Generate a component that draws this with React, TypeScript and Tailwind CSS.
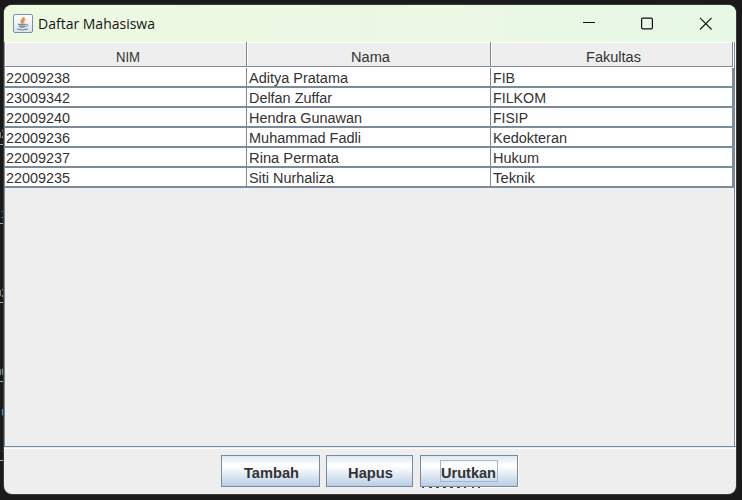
import React from "react";

const rows = [
  ["22009238", "Aditya Pratama", "FIB"],
  ["23009342", "Delfan Zuffar", "FILKOM"],
  ["22009240", "Hendra Gunawan", "FISIP"],
  ["22009236", "Muhammad Fadli", "Kedokteran"],
  ["22009237", "Rina Permata", "Hukum"],
  ["22009235", "Siti Nurhaliza", "Teknik"],
];

const editorMarks = [
  { top: 128, text: "2", color: "text-[#7da4c8]" },
  { top: 208, text: "1", color: "text-[#6f9fc8]" },
  { top: 287, text: "2", color: "text-[#7da4c8]" },
  { top: 366, text: "6", color: "text-[#6fa3b8]" },
  { top: 406, text: "u", color: "text-[#6fa3c8]" },
  { top: 445, text: "-", color: "text-[#a4a4c8]" },
];
const editorLines = [144, 223, 302, 381, 460];
const editorTicks = [132, 290, 369];

function JavaIcon() {
  return (
    <svg width="20" height="20" viewBox="0 0 20 20" className="shrink-0">
      <defs>
        <linearGradient id="tile" x1="0" y1="0" x2="0" y2="1">
          <stop offset="0" stopColor="#ffffff" />
          <stop offset="1" stopColor="#dde2e8" />
        </linearGradient>
      </defs>
      <rect x="0.5" y="0.5" width="19" height="18" rx="1.5" fill="url(#tile)" stroke="#7890ae" />
      <path d="M10.6 3C11.6 5.2 7.3 5.8 8.4 7.8L9.8 9.6M12.2 5.2C9.6 6.4 9.6 7.2 10.8 9" fill="none" stroke="#e8914a" strokeWidth="1.8" />
      <path d="M5.2 10.3H12.5L12 13Q9.4 14.3 6.6 13Z" fill="#9fb3c6" />
      <path d="M5 10.3H12.6M6 12.7Q9 14 12 12.7M12.7 10.5C15.8 9.9 15.3 12.4 12.4 12.7M4 15Q9.5 17 15 14.9" fill="none" stroke="#607f9e" />
    </svg>
  );
}

function TitleBar() {
  return (
    <div className="flex h-[37px] shrink-0 items-center bg-linear-to-r from-[#edf8e0] to-[#e8f8e7] pl-[9px] pr-[23px]">
      <JavaIcon />
      <svg width="124" height="20" className="ml-1 shrink-0 overflow-visible">
        <text x="1" y="15.2" textLength="117" lengthAdjust="spacingAndGlyphs" className="fill-[#151515] font-['Open_Sans',sans-serif] text-[14.5px]">Daftar Mahasiswa</text>
      </svg>
      <svg width="131" height="14" className="ml-auto" fill="none" stroke="#111">
        <path d="M1 5.5H13" />
        <rect x="59.6" y="1.1" width="10.8" height="10.8" rx="1.3" strokeWidth="1.2" />
        <path d="M118 0.9L129.6 12.5M129.6 0.9L118 12.5" strokeWidth="1.1" />
      </svg>
    </div>
  );
}

function Label({ children, width, bold = false }: { children: string; width: number; bold?: boolean }) {
  return (
    <svg width={width} height="18" className="block shrink-0 overflow-visible">
      <text x="0" y="14" textLength={width} lengthAdjust="spacingAndGlyphs" className={`fill-[#333] font-['Liberation_Sans',sans-serif] ${bold ? "text-[15px] font-bold" : "text-[15.5px]"}`}>{children}</text>
    </svg>
  );
}

const widths = [
  [64, 99, 22],
  [64, 83, 53],
  [64, 113, 35],
  [64, 112, 74],
  [64, 90, 46],
  [64, 85, 42],
];

const headers = [
  { name: "NIM", width: 24 },
  { name: "Nama", width: 39 },
  { name: "Fakultas", width: 55 },
];

function Table() {
  return (
    <div className="flex h-[405px] shrink-0 flex-col border-b border-l border-[#7a8a99] bg-[#eee]">
      <div className="flex h-[26px] shrink-0 bg-white">
        <div className="grid w-[728px] grid-cols-[242px_244px_242px]">
          {headers.map((h) => (
            <div key={h.name} className="flex h-[25px] items-center justify-center border-r border-b border-[#7a8a99] bg-[#eee] pl-[4px] pt-[5px] shadow-[inset_1px_1px_0_#fff]">
              <Label width={h.width}>{h.name}</Label>
            </div>
          ))}
        </div>
        <div className="ml-px w-px bg-[#7a8a99]" />
      </div>
      <div className="flex flex-1 bg-[#eee]">
        <div className="flex-1">
          {rows.map((r, i) => (
            <div key={r[0]} className="grid h-5 grid-cols-[242px_244px_243px] border-b-2 border-[#7a8a99] bg-white">
              {r.map((cell, j) => (
                <div key={cell} className={`h-[18px] border-[#7a8a99] pt-px ${j === 0 ? "border-r pl-px" : j === 1 ? "border-r pl-[2px]" : "border-r-2 pl-[2px]"}`}>
                  <Label width={widths[i][j]}>{cell}</Label>
                </div>
              ))}
            </div>
          ))}
        </div>
        <div className="w-px bg-[#7a8a99]" />
        <div className="w-px bg-white" />
      </div>
    </div>
  );
}

function Button({ label, box, text, focused = false }: { label: string; box: string; text: number; focused?: boolean }) {
  return (
    <button className={`flex h-8 items-center justify-center border border-[#7a8a99] bg-[linear-gradient(180deg,#dde8f3_0%,#fff_30%,#fff_34%,#b8cfe5_100%)] ${box}`}>
      <span className={`flex h-[22px] items-center justify-center ${focused ? "w-[58px] border border-[#a3b8cc] pr-px" : "pl-[2px]"}`}>
        <span className="pt-[4px]"><Label width={text} bold>{label}</Label></span>
      </span>
    </button>
  );
}

export default function App() {
  return (
    <div className="relative h-[500px] w-[742px] overflow-hidden bg-[#1a1a1a] pl-1 pt-[5px]">
      <div className="absolute left-0 top-0 h-full w-1 overflow-hidden">
        {editorMarks.map((m) => (
          <span key={m.top} style={{ top: m.top }} className={`absolute left-px font-['Liberation_Mono',monospace] text-[12px] leading-[14px] ${m.color}`}>{m.text}</span>
        ))}
        {editorTicks.map((y) => (
          <span key={y} style={{ top: y }} className="absolute left-0 h-[6px] w-px bg-[#a8792c]" />
        ))}
        {editorLines.map((y) => (
          <span key={y} style={{ top: y }} className="absolute left-0 h-px w-1 bg-[#aaa]" />
        ))}
      </div>
      <div className="relative flex h-[489px] w-[732px] flex-col overflow-hidden rounded-[8px] bg-[#eee] shadow-[0_0_0_1px_#3b3b3b]">
        <TitleBar />
        <Table />
        <div className="h-px shrink-0 bg-[#e2ebf3]" />
        <div className="h-px shrink-0 bg-white" />
        <div className="flex pl-[217px] pt-[6px]">
          <Button label="Tambah" box="w-[99px]" text={55} />
          <Button label="Hapus" box="ml-[6px] w-[87px]" text={45} />
          <div className="relative ml-[7px] h-[33px] w-[99px] bg-white">
            <svg className="absolute bottom-0 left-[2px]" width="60" height="1" stroke="#444">
              <path d="M0 .5H2M7 .5H10M14 .5H17M21 .5H24M28 .5H31M35 .5H38M42 .5H44M50 .5H52M56 .5H58" />
            </svg>
            <div className="relative"><Button label="Urutkan" box="w-[98px]" text={55} focused /></div>
          </div>
        </div>
      </div>
    </div>
  );
}
